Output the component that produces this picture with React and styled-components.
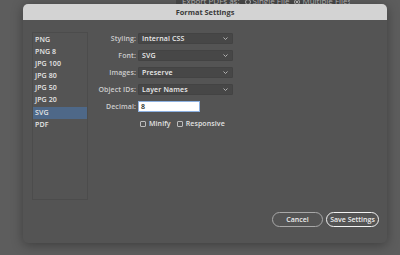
import React from 'react'
import styled, { createGlobalStyle } from 'styled-components'

const Global = createGlobalStyle`
  html, body { margin: 0; padding: 0; }
  body { background: #5d5d5d; font-family: "Open Sans", "Liberation Sans", Arial, sans-serif; }
`

const Page = styled.div`
  width: 400px;
  height: 255px;
  overflow: hidden;
  background: #5d5d5d;
  display: flex;
  flex-direction: column;
`

const BehindBar = styled.div`
  margin-left: 176px;
  width: 168px;
  height: 4px;
  background: #4a4a4a;
  overflow: hidden;
  display: flex;
  align-items: flex-end;
  gap: 5px;
  color: #bdbdbd;
  font-size: 8px;
  line-height: 8px;
  padding-left: 6px;
  white-space: nowrap;
  & > span { margin-bottom: -1px; }
`

const Radio = styled.span`
  display: inline-block;
  width: 6px;
  height: 6px;
  border-radius: 50%;
  border: 1px solid #bdbdbd;
  margin-right: 2px;
  vertical-align: -1px;
  box-sizing: border-box;
  background: ${({ on }) => (on ? 'radial-gradient(#bdbdbd 35%, transparent 40%)' : 'transparent')};
`

const Dialog = styled.div`
  margin-left: 23px;
  width: 364px;
  height: 239px;
  border-radius: 5px;
  overflow: hidden;
  background: #545454;
  box-shadow: 0 2px 12px rgba(0, 0, 0, 0.35);
  display: flex;
  flex-direction: column;
`

const TitleBar = styled.div`
  height: 16px;
  flex: none;
  background: #d3d3d3;
  color: #3a3a3a;
  font-weight: 700;
  font-size: 7.4px;
  display: flex;
  align-items: center;
  justify-content: center;
`

const Body = styled.div`
  flex: 1;
  display: flex;
  flex-direction: column;
  padding: 12px 8px 16px 9px;
`

const Top = styled.div`
  display: flex;
  gap: 8px;
`

const List = styled.div`
  width: 56px;
  height: 168px;
  box-sizing: border-box;
  border: 1px solid #4c4c4c;
  padding-top: 0.5px;
  display: flex;
  flex-direction: column;
`

const Item = styled.div`
  height: 12.2px;
  line-height: 12.2px;
  padding-left: 2px;
  font-size: 7px;
  letter-spacing: 0.1px;
  font-weight: 600;
  color: #e6e6e6;
  background: ${({ selected }) => (selected ? '#4e6888' : 'transparent')};
`

const Form = styled.div`
  display: grid;
  grid-template-columns: 40px 95px;
  column-gap: 2px;
  row-gap: 6px;
  align-content: start;
  padding-top: 1px;
`

const Label = styled.div`
  height: 11px;
  font-size: 7px;
  letter-spacing: 0.1px;
  font-weight: 600;
  color: #cdcdcd;
  text-align: right;
  line-height: 11px;
  white-space: nowrap;
`

const Select = styled.div`
  height: 10.5px;
  background: #474747;
  border: 0.5px solid #434343;
  border-radius: 1px;
  color: #ececec;
  font-size: 7px;
  letter-spacing: 0.15px;
  font-weight: 600;
  display: flex;
  align-items: center;
  justify-content: space-between;
  padding: 0 4px 0 3px;
  box-sizing: border-box;
`

const Input = styled.div`
  width: 62px;
  height: 11px;
  box-sizing: border-box;
  background: #ffffff;
  border: 1px solid #8cb0e0;
  color: #222;
  font-size: 7px;
  font-weight: 600;
  line-height: 9px;
  padding-left: 2px;
`

const Checks = styled.div`
  grid-column: 2;
  display: flex;
  gap: 6px;
  padding-left: 2px;
  margin-top: 1px;
`

const Check = styled.label`
  display: flex;
  align-items: center;
  gap: 3px;
  font-size: 7px;
  letter-spacing: 0.1px;
  font-weight: 600;
  color: #e2e2e2;
`

const Box = styled.span`
  width: 6px;
  height: 6px;
  border: 1px solid #bcbcbc;
  border-radius: 1px;
  box-sizing: border-box;
`

const Buttons = styled.div`
  margin-top: auto;
  display: flex;
  justify-content: flex-end;
  gap: 3px;
`

const Button = styled.div`
  width: ${({ w }) => w}px;
  height: 15px;
  box-sizing: border-box;
  border-radius: 8px;
  border: ${({ primary }) => (primary ? '1.5px solid #f2f2f2' : '1px solid #a8a8a8')};
  color: #ececec;
  font-size: 7px;
  font-weight: 600;
  display: flex;
  align-items: center;
  justify-content: center;
`

const Chevron = () => (
  <svg width="5" height="3" viewBox="0 0 5 3">
    <path d="M0.5 0.5 L2.5 2.5 L4.5 0.5" fill="none" stroke="#bdbdbd" strokeWidth="0.9" />
  </svg>
)

const formats = ['PNG', 'PNG 8', 'JPG 100', 'JPG 80', 'JPG 50', 'JPG 20', 'SVG', 'PDF']

const selects = [
  ['Styling:', 'Internal CSS'],
  ['Font:', 'SVG'],
  ['Images:', 'Preserve'],
  ['Object IDs:', 'Layer Names'],
]

export default function App() {
  return (
    <Page>
      <Global />
      <BehindBar>
        <span>Export PDFs as:</span>
        <span><Radio />Single File</span>
        <span><Radio on />Multiple Files</span>
      </BehindBar>
      <Dialog>
        <TitleBar>Format Settings</TitleBar>
        <Body>
          <Top>
            <List>
              {formats.map((f) => (
                <Item key={f} selected={f === 'SVG'}>{f}</Item>
              ))}
            </List>
            <Form>
              {selects.map(([l, v]) => (
                <React.Fragment key={l}>
                  <Label>{l}</Label>
                  <Select>
                    <span>{v}</span>
                    <Chevron />
                  </Select>
                </React.Fragment>
              ))}
              <Label>Decimal:</Label>
              <Input>8</Input>
              <Checks>
                <Check><Box />Minify</Check>
                <Check><Box />Responsive</Check>
              </Checks>
            </Form>
          </Top>
          <Buttons>
            <Button w={51}>Cancel</Button>
            <Button w={53} primary>Save Settings</Button>
          </Buttons>
        </Body>
      </Dialog>
    </Page>
  )
}
